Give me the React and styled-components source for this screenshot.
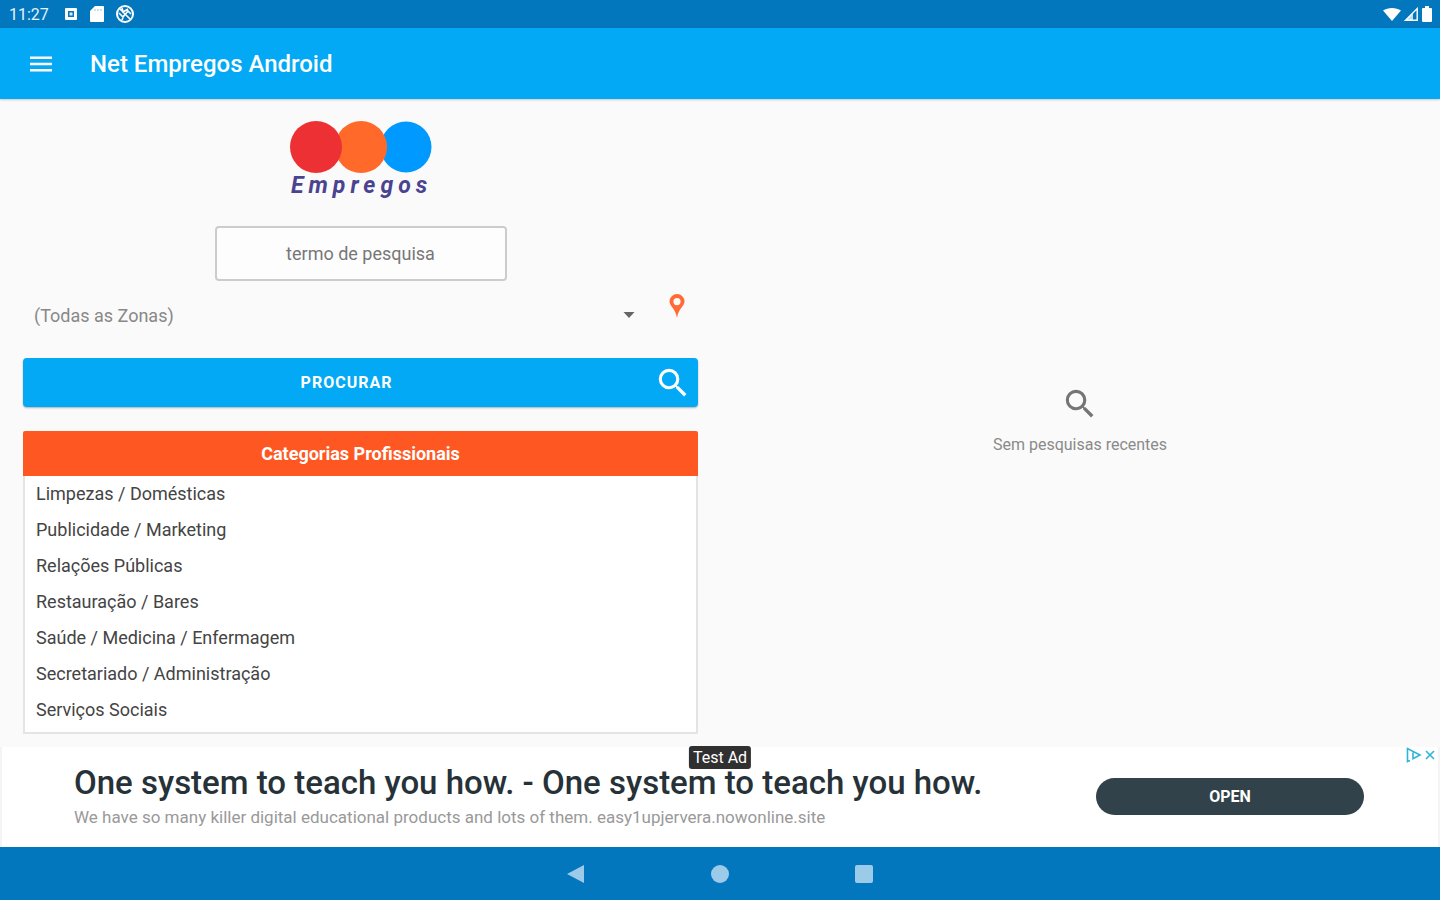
import React, { useState } from 'react'
import styled, { createGlobalStyle } from 'styled-components'

const categories = [
    'Limpezas / Domésticas',
    'Publicidade / Marketing',
    'Relações Públicas',
    'Restauração / Bares',
    'Saúde / Medicina / Enfermagem',
    'Secretariado / Administração',
    'Serviços Sociais',
]

const zones = ['(Todas as Zonas)', 'Aveiro', 'Braga', 'Coimbra', 'Faro', 'Lisboa', 'Porto']

const SearchIcon = ({ size }) => (
    <svg width={size} height={size} viewBox="0 0 24 24" fill="currentColor" aria-hidden="true">
        <path d="M15.5 14h-.79l-.28-.27A6.47 6.47 0 0 0 16 9.5 6.5 6.5 0 1 0 9.5 16c1.61 0 3.09-.59 4.23-1.57l.27.28v.79l5 4.99L20.49 19l-4.99-5zm-6 0C7.01 14 5 11.99 5 9.5S7.01 5 9.5 5 14 7.01 14 9.5 11.99 14 9.5 14z" />
    </svg>
)

const Logo = () => (
    <svg width="144" height="80" viewBox="0 0 144 80" role="img" aria-label="Empregos">
        <circle cx="117" cy="26" r="25.5" fill="#0099ff" />
        <circle cx="72" cy="26" r="26" fill="#ff6a2a" />
        <circle cx="27" cy="26" r="26" fill="#ed3034" />
        <LogoText x="2" y="72">Empregos</LogoText>
    </svg>
)

const StatusBar = () => (
    <Status>
        <Clock>11:27</Clock>
        <svg width="14" height="14" viewBox="0 0 14 14" aria-hidden="true">
            <path fill="#fff" fillRule="evenodd" d="M2 1h10a1 1 0 0 1 1 1v10a1 1 0 0 1-1 1H2a1 1 0 0 1-1-1V2a1 1 0 0 1 1-1zm2 3v6h6V4z" />
            <path fill="#d5eafa" d="M5.500 5.500h3v3h-3z" />
        </svg>
        <svg width="14" height="16" viewBox="0 0 14 16" aria-hidden="true">
            <path fill="#fff" d="M5 0h8a1 1 0 0 1 1 1v14a1 1 0 0 1-1 1H1a1 1 0 0 1-1-1V5z" />
            <path stroke="#8dc3e8" d="M5 3v2M8 3v2M11 3v2" />
        </svg>
        <svg width="18" height="18" viewBox="0 0 18 18" fill="none" stroke="#fff" strokeWidth="2" aria-hidden="true">
            <circle cx="9" cy="9" r="8" />
            <path d="M4 4l10 10M6 3l1 4 5-3M3 8l4 4 5-6 3 3M6 15l2-5" strokeWidth="1.6" />
        </svg>
        <Signals>
            <svg width="18" height="14" viewBox="0 0 18 14" fill="#fff" aria-hidden="true">
                <path d="M0 3.6C5 0 13 0 18 3.6L9 14z" />
            </svg>
            <svg width="14" height="14" viewBox="0 0 14 14" aria-hidden="true">
                <path d="M1.6 13.2L13.2 1.6v11.6z" fill="none" stroke="#fff" strokeWidth="1.4" />
                <path d="M2 13l7-7v7z" fill="#fff" opacity=".75" />
            </svg>
            <svg width="12" height="16" viewBox="0 0 12 16" fill="#fff" aria-hidden="true">
                <path d="M4 0h4v2h2a1 1 0 0 1 1 1v12a1 1 0 0 1-1 1H2a1 1 0 0 1-1-1V3a1 1 0 0 1 1-1h2z" />
            </svg>
        </Signals>
    </Status>
)

const SearchPanel = () => {

    const [ term, setTerm ] = useState('')
    const [ zone, setZone ] = useState(zones[0])

    return (
        <Panel onSubmit={(e) => e.preventDefault()}>
            <Logo />
            <TermInput
                type="text"
                aria-label="termo de pesquisa"
                placeholder="termo de pesquisa"
                value={term}
                onChange={(e) => setTerm(e.target.value)}
            />
            <ZoneRow>
                <SelectWrap>
                    <ZoneSelect aria-label="Zona" value={zone} onChange={(e) => setZone(e.target.value)}>
                        {zones.map((z) => <option key={z}>{z}</option>)}
                    </ZoneSelect>
                    <svg width="12" height="6" viewBox="0 0 12 6" fill="#666" aria-hidden="true">
                        <path d="M0.500 0h11L6 6z" />
                    </svg>
                </SelectWrap>
                <PinButton type="button" aria-label="Usar a minha localização">
                    <svg width="16" height="24" viewBox="0 0 16 24" fill="#ff6a35" aria-hidden="true">
                        <path fillRule="evenodd" d="M8 0a7.5 7.5 0 0 0-7.5 7.5C.5 12 6.6 14.500 8 24c1.400-9.500 7.500-12 7.500-16.500A7.500 7.500 0 0 0 8 0zm0 4a3.600 3.600 0 1 1 0 7.200A3.600 3.600 0 0 1 8 4z" />
                    </svg>
                </PinButton>
            </ZoneRow>
            <SubmitButton type="submit">
                <span>PROCURAR</span>
                <SearchIcon size={38} />
            </SubmitButton>
            <Categories>
                <CategoriesTitle>Categorias Profissionais</CategoriesTitle>
                <CategoryList>
                    {categories.map((name) => (
                        <li key={name}>
                            <CategoryLink href="#">{name}</CategoryLink>
                        </li>
                    ))}
                </CategoryList>
            </Categories>
        </Panel>
    )
}

const AdBanner = () => (
    <Ad>
        <TestLabel>Test Ad</TestLabel>
        <AdCopy>
            <AdTitle>One system to teach you how. - One system to teach you how.</AdTitle>
            <AdText>We have so many killer digital educational products and lots of them. easy1upjervera.nowonline.site</AdText>
        </AdCopy>
        <OpenButton type="button">OPEN</OpenButton>
        <AdChoices>
            <svg width="32" height="16" viewBox="0 0 32 16" fill="none" stroke="#2fb4d6" strokeWidth="1.6" aria-hidden="true">
                <path d="M5 13.500L2.500 14.500V1.500L15 8l-7 3.600V5.600" />
                <path d="M21 4l8 8M29 4l-8 8" />
            </svg>
        </AdChoices>
    </Ad>
)

const App = () => (
    <Screen>
        <GlobalStyle />
        <StatusBar />
        <AppBar>
            <MenuButton type="button" aria-label="Menu">
                <svg width="22" height="16" viewBox="0 0 22 16" fill="#fff" aria-hidden="true">
                    <path d="M0 0.500h22v2.500H0zM0 6.800h22v2.500H0zM0 13h22v2.500H0z" />
                </svg>
            </MenuButton>
            <AppTitle>Net Empregos Android</AppTitle>
        </AppBar>
        <Content>
            <SearchPanel />
            <Recent>
                <SearchIcon size={38} />
                <p>Sem pesquisas recentes</p>
            </Recent>
        </Content>
        <AdBanner />
        <NavBar>
            <NavButton type="button" aria-label="Voltar">
                <svg width="20" height="20" viewBox="0 0 20 20" fill="#9ccbea"><path d="M18 1v18L1 10z" /></svg>
            </NavButton>
            <NavButton type="button" aria-label="Início">
                <svg width="20" height="20" viewBox="0 0 20 20" fill="#9ccbea"><circle cx="10" cy="10" r="9" /></svg>
            </NavButton>
            <NavButton type="button" aria-label="Recentes">
                <svg width="20" height="20" viewBox="0 0 20 20" fill="#9ccbea"><rect x="1" y="1" width="18" height="18" rx="2" /></svg>
            </NavButton>
        </NavBar>
    </Screen>
)

const GlobalStyle = createGlobalStyle`
    * {
        box-sizing: border-box;
    }

    body {
        margin: 0;
        background: #fafafa;
        font-family: Roboto, "Liberation Sans", sans-serif;
    }

    button, input, select {
        font-family: inherit;
    }

    svg {
        display: block;
        flex-shrink: 0;
    }
`

const Screen = styled.div`
    display: flex;
    flex-direction: column;
    min-height: 100vh;
`

const Status = styled.div`
    display: flex;
    align-items: center;
    gap: 12px;
    height: 28px;
    padding: 0 7px 0 9px;
    background: #0277bd;
    color: #e3f2fb;
`

const Clock = styled.time`
    width: 43px;
    font-size: 16px;
`

const Signals = styled.div`
    display: flex;
    align-items: center;
    gap: 3px;
    margin-left: auto;
`

const AppBar = styled.header`
    display: flex;
    align-items: center;
    gap: 28px;
    height: 71px;
    padding: 0 20px;
    background: #03a9f4;
    box-shadow: 0 1px 2px rgba(0, 0, 0, 0.2);
`

const MenuButton = styled.button`
    padding: 10px;
    border: 0;
    background: none;
    cursor: pointer;
`

const AppTitle = styled.h1`
    margin: 0;
    font-size: 24px;
    font-weight: 500;
    line-height: 30px;
    color: #fff;
`

const Content = styled.main`
    display: grid;
    grid-template-columns: 1fr 1fr;
    flex: 1;
`

const Panel = styled.form`
    display: flex;
    flex-direction: column;
    align-items: center;
    padding: 22px 22px 13px 23px;
`

const LogoText = styled.text`
    font-size: 23px;
    font-weight: 700;
    font-style: italic;
    letter-spacing: 5px;
    fill: #4a4391;
`

const TermInput = styled.input`
    width: 292px;
    height: 55px;
    margin-top: 25px;
    border: 2px solid #ccc;
    border-radius: 4px;
    background: #fdfdfd;
    font-size: 18px;
    text-align: center;
    color: #333;

    &::placeholder {
        color: #777;
        opacity: 1;
    }
`

const ZoneRow = styled.div`
    display: flex;
    align-items: flex-start;
    align-self: stretch;
    gap: 34px;
    padding: 13px 13px 0 11px;
`

const SelectWrap = styled.div`
    display: grid;
    flex: 1;
    align-items: center;

    > * {
        grid-area: 1 / 1;
    }

    svg {
        justify-self: end;
        pointer-events: none;
    }
`

const ZoneSelect = styled.select`
    width: 100%;
    height: 42px;
    padding: 0;
    border: 0;
    background: none;
    appearance: none;
    font-size: 18px;
    color: #888;
`

const PinButton = styled.button`
    padding: 0;
    border: 0;
    background: none;
    cursor: pointer;
`

const SubmitButton = styled.button`
    display: grid;
    grid-template-columns: 1fr 38px;
    align-items: center;
    width: 100%;
    height: 49px;
    margin-top: 22px;
    padding: 0 6px 0 16px;
    border: 0;
    border-radius: 4px;
    background: #03a9f4;
    box-shadow: 0 1px 2px rgba(0, 0, 0, 0.3);
    font-size: 16px;
    font-weight: 700;
    letter-spacing: 1px;
    color: #fff;
    cursor: pointer;
`

const Categories = styled.section`
    display: flex;
    flex-direction: column;
    flex: 1;
    width: 100%;
    margin-top: 24px;
`

const CategoriesTitle = styled.h2`
    margin: 0;
    border-radius: 2px 2px 0 0;
    background: #ff5722;
    font-size: 18px;
    font-weight: 700;
    line-height: 45px;
    text-align: center;
    color: #fff;
`

const CategoryList = styled.ul`
    flex: 1;
    margin: 0;
    padding: 0 11px 4px;
    border: 2px solid #e4e4e4;
    border-top: 0;
    background: #fff;
    list-style: none;
`

const CategoryLink = styled.a`
    display: block;
    font-size: 18px;
    line-height: 36px;
    text-decoration: none;
    color: #444;
`

const Recent = styled.section`
    display: flex;
    flex-direction: column;
    align-items: center;
    justify-content: center;
    gap: 10px;
    padding-bottom: 4px;
    color: #757575;

    p {
        margin: 0;
        font-size: 16px;
        line-height: 24px;
        color: #8a8a8a;
    }
`

const Ad = styled.aside`
    position: relative;
    display: flex;
    align-items: center;
    justify-content: space-between;
    height: 100px;
    padding: 0 74px 2px 72px;
    border: solid #f4f4f4;
    border-width: 0 2px;
    background: #fff;
`

const TestLabel = styled.span`
    position: absolute;
    top: -1px;
    left: 50%;
    padding: 0 4px;
    border-radius: 3px;
    background: #303030;
    transform: translateX(-50%);
    font-size: 16px;
    line-height: 23px;
    white-space: nowrap;
    color: #fff;
`

const AdCopy = styled.div`
    display: flex;
    flex-direction: column;
    gap: 5px;
    padding-top: 2px;
`

const AdTitle = styled.h2`
    margin: 0;
    font-size: 33px;
    font-weight: 500;
    line-height: 34px;
    color: #263238;
`

const AdText = styled.p`
    margin: 0;
    font-size: 17px;
    line-height: 24px;
    color: #999;
`

const OpenButton = styled.button`
    width: 268px;
    height: 37px;
    border: 0;
    border-radius: 19px;
    background: #32424a;
    font-size: 16px;
    font-weight: 700;
    color: #fff;
    cursor: pointer;
`

const AdChoices = styled.div`
    position: absolute;
    top: 0;
    right: 1px;
`

const NavBar = styled.nav`
    display: flex;
    align-items: center;
    justify-content: center;
    gap: 104px;
    height: 53px;
    background: #0277bd;
`

const NavButton = styled.button`
    padding: 10px;
    border: 0;
    background: none;
    cursor: pointer;
`

export default App
